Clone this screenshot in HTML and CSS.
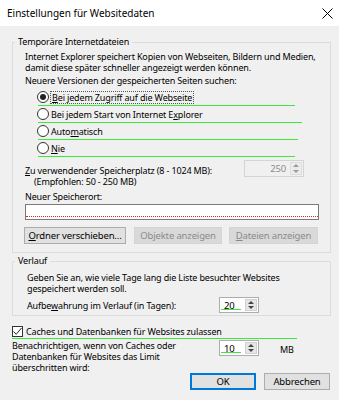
FILE: index.html
```html
<!DOCTYPE html>
<html lang="de">
<head>
    <meta charset="UTF-8">
    <meta name="viewport" content="width=device-width, initial-scale=1.0">
    <title>Einstellungen für Websitedaten</title>
    <link rel="stylesheet" href="styles.css">
</head>
<body>
    <div class="titlebar">
        <span class="title">Einstellungen für Websitedaten</span>
        <svg class="close" width="11" height="11" viewBox="0 0 11 11"><path d="M0.5 0.5L10.5 10.5M10.5 0.5L0.5 10.5" stroke="#000" stroke-width="1"/></svg>
    </div>

    <div class="content">
        <div class="group group-temp">
            <div class="legend">Temporäre Internetdateien</div>
            <p class="text">Internet Explorer speichert Kopien von Webseiten, Bildern und Medien,<br>damit diese später schneller angezeigt werden können.</p>
            <div class="line q">Neuere Versionen der gespeicherten Seiten suchen:</div>

            <div class="radios">
                <div class="radio-row w1"><span class="radio checked"></span><span class="focus"><u>B</u>ei jedem Zugriff auf die Webseite</span></div>
                <div class="radio-row w2"><span class="radio"></span><span>Bei jedem Start von Internet E<u>x</u>plorer</span></div>
                <div class="radio-row w3"><span class="radio"></span><span>Auto<u>m</u>atisch</span></div>
                <div class="radio-row w4"><span class="radio"></span><span><u>N</u>ie</span></div>
            </div>

            <div class="space-row">
                <div class="text">
                    <u>Z</u>u verwendender Speicherplatz (8 - 1024 MB):<br>
                    <span class="indent">(Empfohlen: 50 - 250 MB)</span>
                </div>
                <div class="spinner disabled space-spin">
                    <span class="spin-value">250</span>
                    <span class="spin-btns"><i class="up"></i><i class="down"></i></span>
                </div>
            </div>

            <div class="line path-label">Neuer Speicherort:</div>
            <div class="path-field"></div>

            <div class="btn-row">
                <button class="btn b-move"><u>O</u>rdner verschieben...</button>
                <button class="btn b-obj" disabled>Objekte anzeigen</button>
                <button class="btn b-files" disabled><u>D</u>ateien anzeigen</button>
            </div>
        </div>

        <div class="group group-hist">
            <div class="legend">Verlauf</div>
            <p class="text">Geben Sie an, wie viele Tage lang die Liste besuchter Websites<br>gespeichert werden soll.</p>
            <div class="days-row">
                <span class="days-label">Aufbe<u>w</u>ahrung im Verlauf (in Tagen):</span>
                <div class="spinner">
                    <span class="spin-value left mark">20</span>
                    <span class="spin-btns"><i class="up"></i><i class="down"></i></span>
                </div>
            </div>
        </div>

        <div class="check-row">
            <span class="checkbox"><svg width="9" height="9" viewBox="0 0 9 9"><path d="M0.5 4.5L3.2 7.3L8.5 1" fill="none" stroke="#222" stroke-width="1"/></svg></span>
            <span>Caches und Datenbanken für Websites zulassen</span>
        </div>

        <div class="limit-row">
            <p class="text limit-text">Benachrichtigen, wenn von Caches oder<br>Datenbanken für Websites das Limit<br>überschritten wird:</p>
            <div class="spinner">
                <span class="spin-value left mark">10</span>
                <span class="spin-btns"><i class="up"></i><i class="down"></i></span>
            </div>
            <span class="unit">MB</span>
        </div>

        <div class="footer">
            <button class="btn ok">OK</button>
            <button class="btn cancel">Abbrechen</button>
        </div>
    </div>
</body>
</html>
```
FILE: styles.css
```css
*{
    box-sizing: border-box;
    margin: 0;
    padding: 0;
}
body{
    width: 339px;
    height: 400px;
    background-color: #f0f0f0;
    color: #000;
    font-family: "Noto Sans", "Open Sans", sans-serif;
    font-size: 9px;
    letter-spacing: -0.15px;
    line-height: 11px;
    white-space: nowrap;
    overflow: hidden;
}
u{
    text-decoration: underline;
    text-underline-offset: 1px;
}

.titlebar{
    height: 26px;
    background-color: #fff;
    display: flex;
    align-items: center;
    justify-content: space-between;
    padding: 0 6px 0 7px;
}
.title{
    font-size: 10px;
    letter-spacing: 0;
}
.close{
    margin-top: 1px;
}

.content{
    padding: 0 8px 0 12px;
}

.group{
    border: 1px solid #dcdcdc;
    padding: 0 11px 0 12px;
}
.group-temp{
    margin-top: 16px;
    padding-bottom: 8px;
}
.group-hist{
    margin-top: 8px;
    padding-left: 14px;
    padding-bottom: 2px;
}
.legend{
    display: table;
    line-height: 12px;
    margin: -7px 0 0 -10px;
    padding: 0 3px;
    background-color: #f0f0f0;
}
.group-hist .legend{
    margin-left: -12px;
}
.line{
    line-height: 12px;
}
.group-temp .text{
    margin-top: 3px;
}
.q{
    margin-top: 2px;
}

/* radio buttons */
.radios{
    margin: 2px 0 0 12px;
}
.radio-row{
    height: 17px;
    display: flex;
    align-items: center;
    padding-bottom: 1px;
    position: relative;
}
.radio-row::after{
    content: "";
    position: absolute;
    left: 1px;
    bottom: 0;
    height: 1px;
    background-color: #3de83d;
}
.w1::after{ width: 257px; }
.w2::after{ width: 264px; }
.w3::after{ width: 260px; }
.w4::after{ width: 257px; }
.radio{
    width: 12px;
    height: 12px;
    border: 1px solid #333;
    border-radius: 50%;
    background-color: #fff;
    margin-right: 2px;
    display: flex;
    align-items: center;
    justify-content: center;
}
.radio.checked::before{
    content: "";
    width: 6px;
    height: 6px;
    border-radius: 50%;
    background-color: #222;
}
.focus{
    outline: 1px dotted #555;
    outline-offset: 0;
    padding: 0 1px;
}

/* spinner boxes */
.space-row{
    display: flex;
    align-items: flex-start;
    margin-top: 5px;
}
.indent{
    padding-left: 9px;
}
.spinner{
    display: flex;
    height: 17px;
    border: 1px solid #adadad;
    background-color: #fff;
    padding: 1px;
}
.space-spin{
    width: 60px;
    margin: -2px 15px 0 auto;
}
.spinner.disabled{
    background-color: #f0f0f0;
    border-color: #d4d4d4;
    color: #8c8c8c;
}
.spin-value{
    flex: 1;
    text-align: right;
    padding-right: 4px;
    line-height: 13px;
    font-size: 9.5px;
}
.spin-value.left{
    text-align: left;
    padding: 0 0 0 3px;
}
.spin-value.mark{
    border-bottom: 1px solid #3de83d;
    margin-right: 4px;
    margin-bottom: 1px;
}
.spin-btns{
    width: 12px;
    display: flex;
    flex-direction: column;
    background-color: #e6e6e6;
    border: 1px solid #d0d0d0;
}
.spin-btns i{
    flex: 1;
    display: flex;
    align-items: center;
    justify-content: center;
}
.spin-btns i::before{
    content: "";
    border-left: 3px solid transparent;
    border-right: 3px solid transparent;
}
.up::before{
    border-bottom: 3px solid #444;
}
.down::before{
    border-top: 3px solid #444;
}
.disabled .up::before{ border-bottom-color: #999; }
.disabled .down::before{ border-top-color: #999; }
.disabled .spin-btns{
    background-color: #ececec;
    border-color: #dedede;
}

.path-label{
    margin-top: 4px;
}
.path-field{
    height: 16px;
    margin-top: 1px;
    border: 1px solid #7a7a7a;
    background-color: #fff;
    position: relative;
}
.path-field::after{
    content: "";
    position: absolute;
    left: 0;
    right: 0;
    bottom: 2px;
    border-bottom: 1px dotted #e02020;
}

/* buttons */
.btn{
    font-family: inherit;
    font-size: 9.5px;
    letter-spacing: -0.15px;
    height: 17px;
    background-color: #e1e1e1;
    border: 1px solid #adadad;
    color: #000;
    line-height: 14px;
}
.btn:disabled{
    background-color: #d9d9d9;
    border-color: #d4d4d4;
    color: #8a8a8a;
}
.btn-row{
    display: flex;
    margin: 7px 0 0 -1px;
}
.b-move{ width: 102px; }
.b-obj{ width: 88px; margin-left: 8px; }
.b-files{ width: 89px; margin-left: 7px; }

.group-hist .text{
    margin-top: 5px;
}
.days-row{
    display: flex;
    align-items: center;
    margin-top: 3px;
}
.days-label{
    width: 192px;
}
.days-row .spinner{
    width: 40px;
    height: 16px;
}

.check-row{
    display: flex;
    align-items: center;
    height: 14px;
    margin-top: 9px;
    border-bottom: 1px solid #3de83d;
    width: 285px;
    padding-bottom: 1px;
}
.checkbox{
    width: 11px;
    height: 11px;
    border: 1px solid #333;
    background-color: #fff;
    display: flex;
    align-items: center;
    justify-content: center;
    margin-right: 3px;
}

.limit-row{
    display: flex;
    align-items: flex-start;
    margin-top: 1px;
}
.limit-text{
    width: 207px;
}
.limit-row .spinner{
    width: 40px;
    height: 16px;
}
.unit{
    margin: 4px 0 0 21px;
}

.footer{
    display: flex;
    justify-content: flex-end;
    gap: 8px;
    margin-right: 1px;
}
.footer .btn{
    width: 66px;
}
.ok{
    border: 1px solid #0078d7;
    box-shadow: inset 0 0 0 1px #0078d7;
}
```
